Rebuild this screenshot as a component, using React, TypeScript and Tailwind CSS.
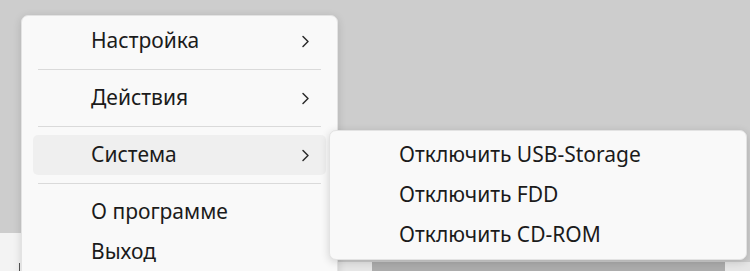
import { ReactNode } from "react";

const font = { fontFamily: '"Segoe UI", "Noto Sans", "Open Sans", sans-serif' };

const Chevron = () => (
  <svg width="9" height="13" viewBox="0 0 9 13" fill="none">
    <polyline points="2,1.5 7,6.5 2,11.5" stroke="#2b2b2b" strokeWidth="1.5" strokeLinecap="round" strokeLinejoin="round" />
  </svg>
);

const Item = ({ children, sub, active }: { children: ReactNode; sub?: boolean; active?: boolean }) => (
  <div
    className={`mx-[11px] flex h-[40px] items-center justify-between rounded-[5px] pl-[58px] pr-[16px] text-[21px] text-[#1b1b1b] ${
      active ? "bg-[#efefef]" : ""
    }`}
  >
    <span>{children}</span>
    {sub && <Chevron />}
  </div>
);

const Separator = () => <div className="mx-[16px] my-[8px] h-px bg-[#dadada]" />;

const SubItem = ({ children }: { children: ReactNode }) => (
  <div className="mx-[4px] flex h-[40px] items-center pl-[65px] text-[21px] text-[#1b1b1b]">{children}</div>
);

export default function App() {
  return (
    <div className="relative h-[271px] w-[750px] overflow-hidden" style={font}>
      {/* фон окна */}
      <div className="flex h-full flex-col">
        <div className="h-[233px] bg-[#cdcdcd]" />
        <div className="flex flex-1">
          <div className="relative w-[338px] bg-[#f3f3f3]">
            <div className="absolute bottom-0 left-[19px] h-[8px] w-px bg-[#555]" />
          </div>
          <div className="flex flex-1 flex-col">
            <div className="h-[29px] bg-[#cdcdcd]" />
            <div className="flex flex-1">
              <div className="w-[34px] bg-[#e6e6e6]" />
              <div className="flex-1 bg-[#acacac]" />
              <div className="w-[25px] bg-[#e6e6e6]" />
            </div>
          </div>
        </div>
      </div>

      {/* главное меню */}
      <div className="absolute left-[21px] top-[15px] h-[280px] w-[317px] rounded-[7px] border border-[#e3e3e3] bg-[#f9f9f9] pt-[5px] shadow-[0_2px_8px_rgba(0,0,0,0.14)]">
        <Item sub>Настройка</Item>
        <Separator />
        <Item sub>Действия</Item>
        <Separator />
        <Item sub active>
          Система
        </Item>
        <Separator />
        <Item>О программе</Item>
        <Item>Выход</Item>
      </div>

      {/* подменю */}
      <div className="absolute left-[329px] top-[130px] h-[130px] w-[418px] rounded-[7px] border border-[#e3e3e3] bg-[#f9f9f9] pt-[4px] shadow-[0_2px_8px_rgba(0,0,0,0.16)]">
        <SubItem>Отключить USB-Storage</SubItem>
        <SubItem>Отключить FDD</SubItem>
        <SubItem>Отключить CD-ROM</SubItem>
      </div>
    </div>
  );
}
